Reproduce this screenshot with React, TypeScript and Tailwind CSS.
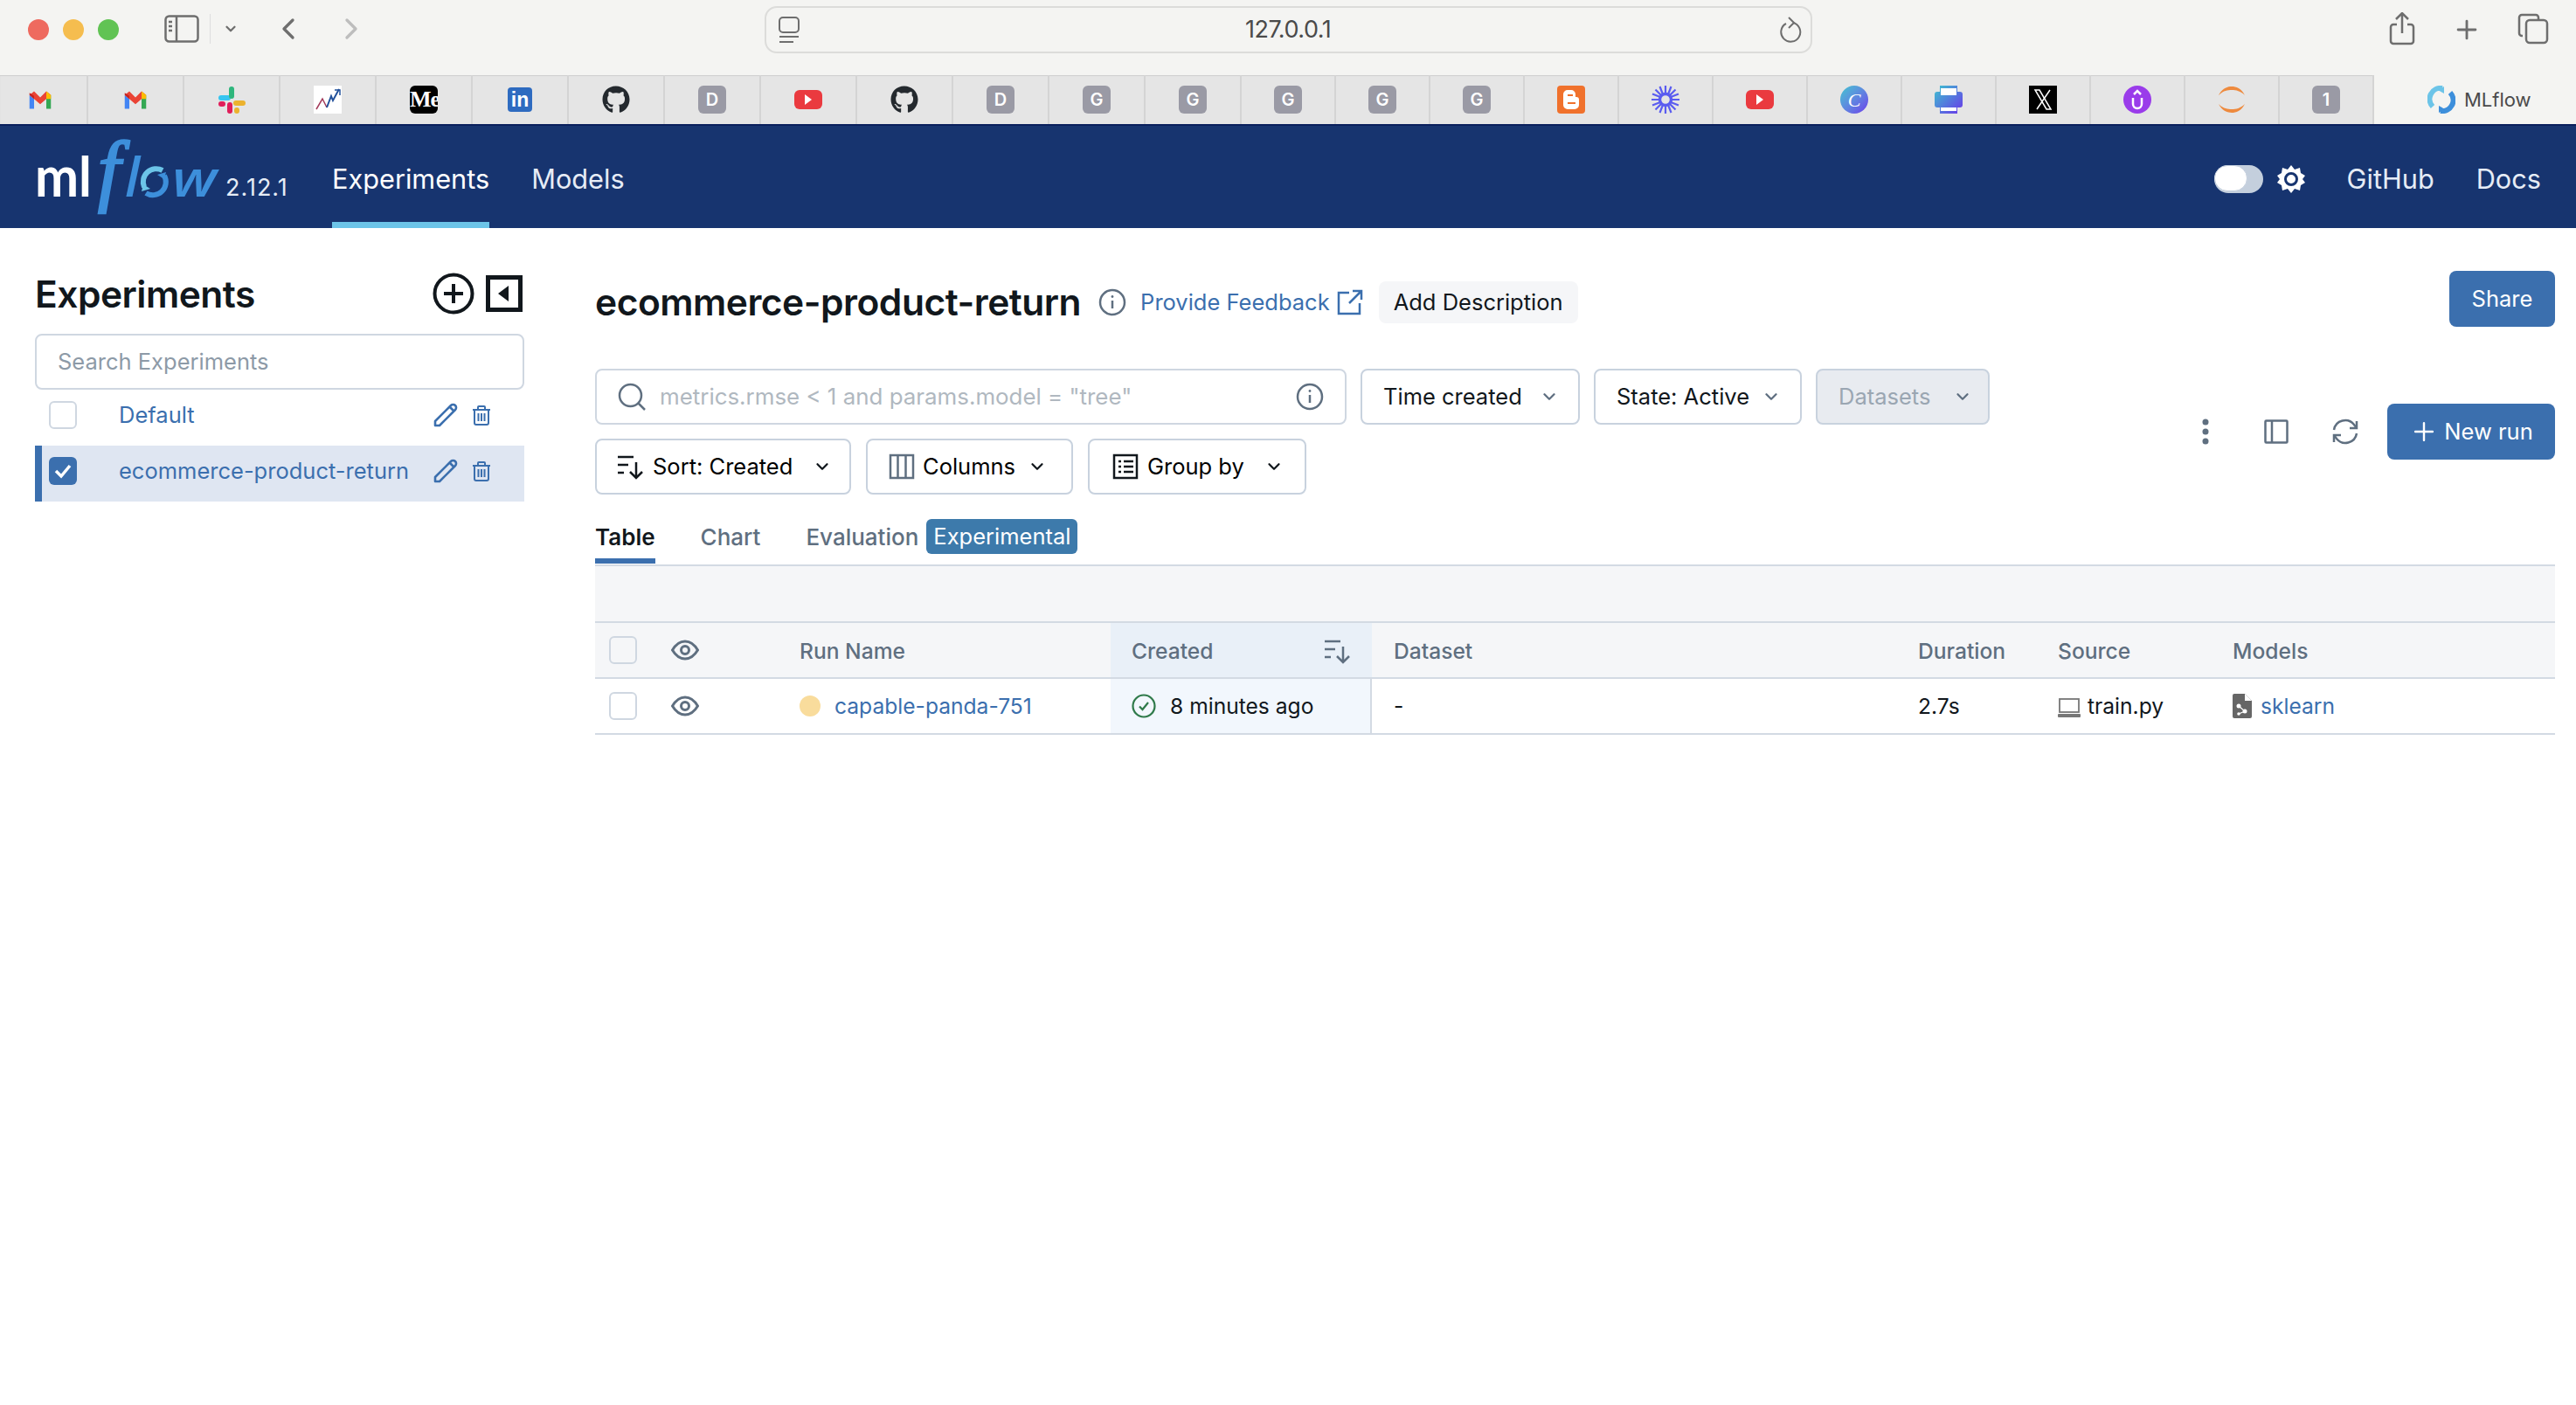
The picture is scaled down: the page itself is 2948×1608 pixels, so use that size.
import { ReactNode } from "react";
import { ChevronDown, ChevronLeft, ChevronRight, Plus } from "lucide-react";
import { FaGithub } from "react-icons/fa";

function Tile({ label, bg = "bg-[#9a9aa5]" }: { label: string; bg?: string }) {
  return (
    <div className={`w-8 h-8 rounded-md ${bg} text-white flex items-center justify-center text-[20px] font-semibold`}>
      {label}
    </div>
  );
}

function Gmail() {
  return (
    <svg width="28" height="22" viewBox="0 0 32 24">
      <path d="M2 6v18h6V11z" fill="#4285f4" />
      <path d="M30 6v18h-6V11z" fill="#34a853" />
      <path d="M2 6 8 1l8 8 8-8 6 5v0l-6 5-8 7-8-7z" fill="#ea4335" />
      <path d="M24 1l6 5v5h-6z" fill="#fbbc04" />
      <path d="M2 3l6 4v4L2 6z" fill="#c5221f" />
    </svg>
  );
}

function Slack() {
  return (
    <svg width="32" height="32" viewBox="0 0 32 32">
      <rect x="1" y="11" width="14" height="6" rx="3" fill="#36c5f0" />
      <rect x="11" y="1" width="6" height="14" rx="3" fill="#2eb67d" transform="translate(2 0)" />
      <rect x="18" y="17" width="14" height="6" rx="3" fill="#ecb22e" />
      <rect x="11" y="19" width="6" height="13" rx="3" fill="#e01e5a" />
      <rect x="1" y="18" width="8" height="6" rx="3" fill="#e01e5a" />
      <rect x="19" y="25" width="6" height="7" rx="3" fill="#ecb22e" />
    </svg>
  );
}

function Trend() {
  return (
    <svg width="32" height="32" viewBox="0 0 32 32">
      <rect width="32" height="32" fill="#fff" />
      <path d="M3 27 10 15 15 25" fill="none" stroke="#a33a5a" strokeWidth="1.5" />
      <path d="M15 25 20 12 22 17 29 4" fill="none" stroke="#21509b" strokeWidth="2" />
      <path d="M24 5h6v6" fill="none" stroke="#21509b" strokeWidth="1.5" />
    </svg>
  );
}

function Medium() {
  return (
    <div className="w-8 h-8 rounded-md bg-black overflow-hidden text-white font-['Liberation_Serif',serif] text-[26px] font-bold leading-8 tracking-[-1px] whitespace-nowrap">
      Me
    </div>
  );
}

function LinkedIn() {
  return (
    <div className="w-7 h-7 rounded-sm bg-[#2e6bc0] text-white text-[23px] font-bold leading-7 text-center font-['Liberation_Sans',sans-serif]">
      in
    </div>
  );
}

function YouTube() {
  return (
    <div className="w-8 h-[22px] rounded-md bg-[#ea3a3f] flex items-center justify-center">
      <div className="w-0 h-0 border-y-[6px] border-y-transparent border-l-[8px] border-l-white" />
    </div>
  );
}

function Blogger() {
  return (
    <div className="w-8 h-8 rounded-sm bg-[#f0712c] flex items-center justify-center">
      <svg width="22" height="24" viewBox="0 0 22 24">
        <path d="M2 6a5 5 0 0 1 5-5h4a5 5 0 0 1 5 5v3h1a3 3 0 0 1 3 3v6a5 5 0 0 1-5 5H7a5 5 0 0 1-5-5z" fill="#fff" />
        <rect x="7" y="6" width="6" height="2" fill="#f0712c" />
        <rect x="7" y="15" width="9" height="2" fill="#f0712c" />
      </svg>
    </div>
  );
}

function Burst() {
  return (
    <svg width="32" height="32" viewBox="0 0 32 32" stroke="#5a5cf0" strokeWidth="3.4">
      <path d="M16 0v10M16 22v10M0 16h10M22 16h10M4.500 4.500l7 7M20.500 20.500l7 7M27.500 4.500l-7 7M11.500 20.500l-7 7M9.500 1l3.500 9M19 22l3.500 9M22.500 1 19 10M13 22 9.500 31M1 9.500l9 3.500M22 19l9 3.500M31 9.500 22 13M10 19l-9 3.500" strokeWidth="2.200" />
      <circle cx="16" cy="16" r="6.500" fill="none" />
    </svg>
  );
}

function Canva() {
  return (
    <div className="w-8 h-8 rounded-full bg-gradient-to-br from-[#3cc4cf] to-[#6b35ea] flex items-center justify-center text-white italic text-[22px] font-['Liberation_Serif',serif]">
      C
    </div>
  );
}

function Printer() {
  return (
    <svg width="34" height="32" viewBox="0 0 34 32">
      <defs>
        <linearGradient id="pg" x1="0" y1="0" x2="1" y2="1">
          <stop offset="0" stopColor="#3cc4cf" />
          <stop offset="1" stopColor="#6b35ea" />
        </linearGradient>
      </defs>
      <path d="M7 0h20v7h3a3 3 0 0 1 3 3v12a3 3 0 0 1-3 3h-3v7H7v-7H4a3 3 0 0 1-3-3V10a3 3 0 0 1 3-3h3z" fill="url(#pg)" />
      <rect x="8" y="3" width="18" height="8" fill="#fff" />
      <rect x="8" y="25" width="18" height="4" fill="#fff" />
    </svg>
  );
}

function XIcon() {
  return (
    <svg width="32" height="32" viewBox="0 0 32 32">
      <rect width="32" height="32" fill="#000" />
      <path d="M7 5h5l13 22h-5z" fill="none" stroke="#fff" strokeWidth="1.500" />
      <path d="M24 5 9 27" stroke="#fff" strokeWidth="1.500" />
    </svg>
  );
}

function Upwork() {
  return (
    <svg width="32" height="32" viewBox="0 0 32 32">
      <circle cx="16" cy="16" r="16" fill="#9a3cea" />
      <path d="M11 14v7a5 5 0 0 0 10 0v-7" fill="none" stroke="#fff" strokeWidth="2.500" />
      <path d="M12 10l4-4 4 4" fill="none" stroke="#fff" strokeWidth="2.500" />
    </svg>
  );
}

function Arcs() {
  return (
    <svg width="32" height="32" viewBox="0 0 32 32" fill="#ee8a3e">
      <path d="M1 11C5 3 11 1 16 1s11 2 15 10C26 6 21 5 16 5S6 6 1 11z" />
      <path d="M1 21c4 8 10 10 15 10s11-2 15-10c-5 5-10 6-15 6S6 26 1 21z" />
    </svg>
  );
}

function MlflowMark() {
  return (
    <svg width="32" height="32" viewBox="0 0 32 32" fill="none" strokeWidth="6">
      <path d="M6 24A12.500 12.500 0 0 1 17 3" stroke="#6cc4e8" />
      <path d="M26 8A12.500 12.500 0 0 1 15 29" stroke="#3d8fdb" />
      <path d="M19 1v8l-7-4z" fill="#6cc4e8" strokeWidth="0" />
      <path d="M13 31v-8l7 4z" fill="#3d8fdb" strokeWidth="0" />
    </svg>
  );
}

const tabs: { icon: ReactNode; w: string }[] = [
  { icon: <div className="pr-[8px]"><Gmail /></div>, w: "w-[101px]" },
  { icon: <Gmail />, w: "w-[110px]" },
  { icon: <Slack />, w: "w-[110px]" },
  { icon: <Trend />, w: "w-[110px]" },
  { icon: <Medium />, w: "w-[110px]" },
  { icon: <LinkedIn />, w: "w-[110px]" },
  { icon: <FaGithub className="w-8 h-8 text-[#24292e]" />, w: "w-[110px]" },
  { icon: <Tile label="D" />, w: "w-[110px]" },
  { icon: <YouTube />, w: "w-[110px]" },
  { icon: <FaGithub className="w-8 h-8 text-[#24292e]" />, w: "w-[110px]" },
  { icon: <Tile label="D" />, w: "w-[110px]" },
  { icon: <Tile label="G" />, w: "w-[110px]" },
  { icon: <Tile label="G" />, w: "w-[110px]" },
  { icon: <Tile label="G" />, w: "w-[108px]" },
  { icon: <Tile label="G" />, w: "w-[108px]" },
  { icon: <Tile label="G" />, w: "w-[108px]" },
  { icon: <Blogger />, w: "w-[108px]" },
  { icon: <Burst />, w: "w-[108px]" },
  { icon: <YouTube />, w: "w-[108px]" },
  { icon: <Canva />, w: "w-[108px]" },
  { icon: <Printer />, w: "w-[108px]" },
  { icon: <XIcon />, w: "w-[108px]" },
  { icon: <Upwork />, w: "w-[108px]" },
  { icon: <Arcs />, w: "w-[108px]" },
  { icon: <Tile label="1" />, w: "w-[108px]" },
];

function BrowserChrome() {
  return (
    <>
      <div className="h-[86px] bg-[#f4f4f2] flex items-start relative">
        <div className="flex gap-4 ml-8 mt-[22px]">
          <div className="w-6 h-6 rounded-full bg-[#ee6a5f]" />
          <div className="w-6 h-6 rounded-full bg-[#f5bd4f]" />
          <div className="w-6 h-6 rounded-full bg-[#61c354]" />
        </div>
        <svg width="40" height="32" viewBox="0 0 40 32" className="ml-[52px] mt-[17px]" fill="none" stroke="#6e6e6e" strokeWidth="2.500">
          <rect x="1.500" y="1.500" width="37" height="29" rx="4" />
          <path d="M14 2v28" />
          <path d="M5 8h4M5 13h4M5 18h4" />
        </svg>
        <div className="w-px h-[34px] bg-[#dedede] ml-[12px] mt-[16px]" />
        <ChevronDown className="w-[18px] h-[18px] text-[#6e6e6e] ml-[14px] mt-[24px]" strokeWidth={3} />
        <ChevronLeft className="w-[40px] h-[40px] text-[#6e6e6e] ml-[37px] mt-[13px]" strokeWidth={2} />
        <ChevronRight className="w-[40px] h-[40px] text-[#bdbdbd] ml-[32px] mt-[13px]" strokeWidth={2} />
        <div className="w-[1199px] h-[54px] ml-[453px] mt-[7px] border-2 border-[#dcdcda] rounded-[14px] flex items-center justify-between pl-[14px] pr-[10px] relative">
          <svg width="24" height="32" viewBox="0 0 24 32" fill="none" stroke="#6e6e6e" strokeWidth="2">
            <rect x="1" y="2" width="22" height="17" rx="4" />
            <path d="M1 24h22" />
            <path d="M1 30h16" />
          </svg>
          <span className="absolute left-[548px] text-[27px] text-[#4a4a4a] font-['Inter',sans-serif] tracking-[-0.5px]">127.0.0.1</span>
          <svg width="26" height="30" viewBox="0 0 26 30" fill="none" stroke="#6e6e6e" strokeWidth="2">
            <path d="M8 8a11 11 0 1 0 8-1" />
            <path d="M11 1l6 6-6 6" />
          </svg>
        </div>
        <div className="flex-1" />
        <svg width="30" height="38" viewBox="0 0 30 38" className="mt-[14px]" fill="none" stroke="#6e6e6e" strokeWidth="2.500">
          <path d="M9 14H5a3 3 0 0 0-3 3v16a3 3 0 0 0 3 3h20a3 3 0 0 0 3-3V17a3 3 0 0 0-3-3h-4" />
          <path d="M15 24V2M8 8l7-7 7 7" />
        </svg>
        <Plus className="w-[34px] h-[34px] text-[#6e6e6e] ml-[42px] mt-[17px]" strokeWidth={2} />
        <svg width="36" height="36" viewBox="0 0 36 36" className="ml-[41px] mr-[31px] mt-[15px]" fill="none" stroke="#6e6e6e" strokeWidth="2.500">
          <path d="M6 26H5a3 3 0 0 1-3-3V5a3 3 0 0 1 3-3h16a3 3 0 0 1 3 3v2" />
          <rect x="10" y="8" width="24" height="26" rx="4" />
        </svg>
      </div>
      <div className="h-[56px] flex bg-[#e5e5e5] shadow-[inset_0_1px_1px_#cfcfcf]">
        {tabs.map((t, i) => (
          <div key={i} className={`${t.w} h-full shrink-0 border-r-2 border-[#d4d4d4] flex items-center justify-center`}>
            {t.icon}
          </div>
        ))}
        <div className="flex-1 bg-[#f4f4f2] flex items-center pl-[61px] gap-[10px]">
          <MlflowMark />
          <span className="text-[22px] text-[#4a4a4a] font-['Inter',sans-serif]">MLflow</span>
        </div>
      </div>
    </>
  );
}

function Logo() {
  return (
    <svg width="212" height="84" viewBox="0 0 212 84" className="shrink-0 overflow-visible">
      <text x="0" y="64" fontFamily="Lato, sans-serif" fontWeight="700" fontSize="64" fill="#fff" textLength="65" lengthAdjust="spacingAndGlyphs">ml</text>
      <text x="72" y="64" fontFamily="'Liberation Serif', serif" fontStyle="italic" fontSize="92" fill="#3d8fdb" stroke="#3d8fdb" strokeWidth="2.500">f</text>
      <text x="103" y="64" fontFamily="'Open Sans', sans-serif" fontStyle="italic" fontWeight="600" fontSize="62" fill="#3d8fdb">l</text>
      <path d="M125 53A15 15 0 0 1 146 34" fill="none" stroke="#6cc4e8" strokeWidth="6" />
      <path d="M122 58l10-3-8-5z" fill="#6cc4e8" />
      <path d="M148 40A15 15 0 0 1 127 60" fill="none" stroke="#3d8fdb" strokeWidth="6" />
      <path d="M150 36l-10 3 8 5z" fill="#3d8fdb" />
      <text x="157" y="64" fontFamily="'Open Sans', sans-serif" fontStyle="italic" fontWeight="600" fontSize="58" fill="#3d8fdb" textLength="51" lengthAdjust="spacingAndGlyphs">w</text>
    </svg>
  );
}

function TopNav() {
  return (
    <div className="h-[119px] bg-[#17346f] border-t-2 border-[#0a1f5c] flex items-center text-[#e6ecf6] text-[30.700px] pl-10 pr-10">
      <Logo />
      <span className="text-[27px] tracking-[1px] text-[#e6ecf6] mt-[26px] ml-[6px] w-[122px] shrink-0">2.12.1</span>
      <div className="h-full relative flex items-center text-white pt-[6px]">
        <span>Experiments</span>
        <div className="absolute bottom-0 left-0 right-0 h-[7px] bg-[#6cc4e8]" />
      </div>
      <span className="ml-[48px] pt-[6px]">Models</span>
      <div className="flex-1" />
      <div className="w-[56px] h-8 rounded-full bg-[#c4cfdd] relative mt-[5px] -ml-[2px] mr-[2px]">
        <div className="absolute left-0 top-0 w-[38px] h-[30px] rounded-full bg-white border border-[#c4cfdd]" />
      </div>
      <svg width="32" height="32" viewBox="0 0 32 32" className="ml-[14px] mt-[5px]">
        <path d="M16 0l4 5 6-2 1 6 5 3-3 4 3 4-5 3-1 6-6-2-4 5-4-5-6 2-1-6-5-3 3-4-3-4 5-3 1-6 6 2z" fill="#fff" />
        <circle cx="16" cy="16" r="6.500" fill="none" stroke="#17346f" strokeWidth="3" />
      </svg>
      <span className="ml-[48px] pt-[6px]">GitHub</span>
      <span className="ml-[48px] pt-[6px]">Docs</span>
    </div>
  );
}

function Checkbox({ checked }: { checked?: boolean }) {
  return checked ? (
    <div className="w-8 h-8 rounded-md bg-[#3b6fae] flex items-center justify-center shrink-0">
      <svg width="22" height="22" viewBox="0 0 22 22" fill="none" stroke="#fff" strokeWidth="3.500">
        <path d="M3 11l6 6L19 5" />
      </svg>
    </div>
  ) : (
    <div className="w-8 h-8 rounded-md bg-white border-2 border-[#cfd7e1] shrink-0" />
  );
}

function PencilIcon() {
  return (
    <svg width="28" height="28" viewBox="0 0 28 28" fill="none" stroke="#3b6fae" strokeWidth="2.600" strokeLinejoin="round" className="shrink-0">
      <path d="M2 21 20 3a3.500 3.500 0 0 1 5 5L7 26H2z" />
      <path d="M18.500 4.500l5 5" />
    </svg>
  );
}

function TrashIcon() {
  return (
    <svg width="20" height="23" viewBox="0 0 20 23" fill="none" stroke="#3b6fae" strokeWidth="2" className="shrink-0">
      <path d="M0 5h20" />
      <path d="M6 5V2a1 1 0 0 1 1-1h6a1 1 0 0 1 1 1v3" />
      <path d="M2 5v15a2 2 0 0 0 2 2h12a2 2 0 0 0 2-2V5" />
      <path d="M6.500 9v9M10 9v9M13.500 9v9" />
    </svg>
  );
}

function ExperimentRow({ name, selected }: { name: string; selected?: boolean }) {
  return (
    <div className={`h-[64px] flex items-center pb-[6px] text-[#3b6fae] ${selected ? "bg-[#dfe6f2] border-l-8 border-[#3b6fae]" : "border-l-8 border-transparent"}`}>
      <div className="ml-2">
        <Checkbox checked={selected} />
      </div>
      <span className="ml-[48px] w-[360px] shrink-0 whitespace-nowrap">{name}</span>
      <PencilIcon />
      <div className="ml-[17px]">
        <TrashIcon />
      </div>
    </div>
  );
}

function Sidebar() {
  return (
    <div className="w-[560px] ml-10 pt-[51px] shrink-0">
      <div className="flex items-center justify-between h-[47px]">
        <h2 className="text-[42.500px] font-semibold text-[#11171c] tracking-[-0.5px] mt-[2px]">Experiments</h2>
        <div className="flex items-center">
          <svg width="48" height="48" viewBox="0 0 48 48" fill="none" stroke="#11171c" strokeWidth="4">
            <circle cx="24" cy="24" r="21.500" />
            <path d="M24 13v22M13 24h22" />
          </svg>
          <svg width="42" height="42" viewBox="0 0 42 42" className="ml-[13px] mr-[2px]">
            <rect x="2.500" y="2.500" width="37" height="37" fill="none" stroke="#11171c" strokeWidth="5" />
            <path d="M26 12v18L14 21z" fill="#11171c" />
          </svg>
        </div>
      </div>
      <div className="mt-[23px] h-[64px] rounded-lg border-2 border-[#cfd7e1] flex items-center pl-[24px] text-[#8d9aa7]">
        Search Experiments
      </div>
      <ExperimentRow name="Default" />
      <ExperimentRow name="ecommerce-product-return" selected />
    </div>
  );
}

function InfoIcon({ color = "#5f6f80" }: { color?: string }) {
  return (
    <svg width="32" height="32" viewBox="0 0 32 32" fill="none" stroke={color} strokeWidth="2.500" className="shrink-0">
      <circle cx="16" cy="16" r="14" />
      <path d="M16 14v9" />
      <circle cx="16" cy="9.500" r="1.400" fill={color} stroke="none" />
    </svg>
  );
}

function SortIcon({ color = "#11171c" }: { color?: string }) {
  return (
    <svg width="30" height="30" viewBox="0 0 30 30" fill="none" stroke={color} strokeWidth="2.500" className="shrink-0">
      <path d="M0 4h18M0 13h12M0 22h7" />
      <path d="M21 10v18M14 21l7 7 7-7" />
    </svg>
  );
}

function Select({ label, w, pr, disabled }: { label: string; w: string; pr: string; disabled?: boolean }) {
  return (
    <div className={`${w} ${pr} h-[64px] rounded-lg border-2 border-[#c8d2de] flex items-center justify-between pl-[24px] ${disabled ? "bg-[#e8ebf0] text-[#9aa6b2]" : "bg-white text-[#11171c]"}`}>
      <span className="whitespace-nowrap">{label}</span>
      <ChevronDown className="w-[22px] h-[22px] text-[#5f6f80]" strokeWidth={2.5} />
    </div>
  );
}

function IconButton({ icon, label, w, pl, gap, mr }: { icon: ReactNode; label: string; w: string; pl: string; gap: string; mr: string }) {
  return (
    <div className={`${w} ${pl} h-[64px] rounded-lg border-2 border-[#c8d2de] flex items-center`}>
      {icon}
      <span className={`${gap} whitespace-nowrap`}>{label}</span>
      <div className="flex-1" />
      <ChevronDown className={`w-[22px] h-[22px] text-[#11171c] ${mr}`} strokeWidth={2.5} />
    </div>
  );
}

function EyeIcon() {
  return (
    <svg width="32" height="24" viewBox="0 0 32 24" fill="none" stroke="#5f6f80" strokeWidth="3">
      <path d="M1.500 12C6 4.500 11 2 16 2s10 2.500 14.500 10C26 19.500 21 22 16 22S6 19.500 1.500 12z" />
      <circle cx="16" cy="12" r="4.500" />
    </svg>
  );
}

function RunsTable() {
  const cols = "grid grid-cols-[87px_147px_356px_299px_625px_160px_200px_1fr]";
  return (
    <div className="text-[24.600px]">
      <div className="h-[65px] bg-[#f5f6f8] border-b-2 border-[#d3dae3]" />
      <div className={`${cols} h-[64px] bg-[#f5f6f8] border-b-2 border-[#d3dae3] text-[#5f6f80] font-medium items-center`}>
        <div className="pl-4">
          <div className="w-8 h-8 rounded-md border-2 border-[#cfd7e1]" />
        </div>
        <EyeIcon />
        <span className="pt-[2px]">Run Name</span>
        <div className="h-full bg-[#e9f0f8] flex items-center justify-between pl-6 pr-6 pt-[2px]">
          <span>Created</span>
          <SortIcon color="#5f6f80" />
        </div>
        <span className="pl-[25px] pt-[2px]">Dataset</span>
        <span className="pt-[2px]">Duration</span>
        <span className="pt-[2px]">Source</span>
        <span className="pt-[2px]">Models</span>
      </div>
      <div className={`${cols} h-[64px] border-b-2 border-[#d3dae3] text-[#11171c] items-center`}>
        <div className="pl-4">
          <div className="w-8 h-8 rounded-md border-2 border-[#cfd7e1]" />
        </div>
        <EyeIcon />
        <div className="flex items-center gap-4">
          <div className="w-6 h-6 rounded-full bg-[#f9dc9c]" />
          <span className="text-[#3b6fae]">capable-panda-751</span>
        </div>
        <div className="h-full bg-[#f2f7fd] border-r-2 border-[#d3dae3] flex items-center pl-6">
          <svg width="28" height="28" viewBox="0 0 28 28" fill="none" stroke="#2f7a4a" strokeWidth="2.200">
            <circle cx="14" cy="14" r="12.500" />
            <path d="M9 14.500l3.500 3.500L19 10" />
          </svg>
          <span className="ml-4">8 minutes ago</span>
        </div>
        <span className="pl-[25px]">-</span>
        <span>2.7s</span>
        <div className="flex items-center gap-2">
          <svg width="26" height="22" viewBox="0 0 26 22" fill="none" className="mt-1">
            <rect x="2" y="1" width="22" height="15" fill="none" stroke="#777" strokeWidth="1.800" />
            <rect x="0" y="18" width="26" height="4" rx="1" fill="#777" />
          </svg>
          <span>train.py</span>
        </div>
        <div className="flex items-center gap-[10px]">
          <svg width="22" height="28" viewBox="0 0 22 28">
            <path d="M2 0h12l8 8v18a2 2 0 0 1-2 2H2a2 2 0 0 1-2-2V2a2 2 0 0 1 2-2z" fill="#666" />
            <path d="M14 0v8h8z" fill="#fff" />
            <circle cx="7" cy="14" r="2.500" fill="#fff" />
            <circle cx="14" cy="20" r="2.500" fill="#fff" />
            <circle cx="7" cy="23" r="1.800" fill="#fff" />
            <path d="M7 14l7 6-7 3" stroke="#fff" strokeWidth="1.200" fill="none" />
          </svg>
          <span className="text-[#3b6fae]">sklearn</span>
        </div>
      </div>
    </div>
  );
}

function Content() {
  return (
    <div className="flex-1 min-w-0 ml-[81px] mr-6 pt-[49px]">
      <div className="flex items-start justify-between">
        <div className="flex items-center h-[72px]">
          <h1 className="text-[42.500px] font-semibold text-[#11171c] tracking-[-0.5px] whitespace-nowrap">ecommerce-product-return</h1>
          <div className="ml-5">
            <InfoIcon />
          </div>
          <span className="ml-[16px] text-[#3b6fae] whitespace-nowrap">Provide Feedback</span>
          <svg width="30" height="30" viewBox="0 0 30 30" fill="none" stroke="#3b6fae" strokeWidth="2.500" className="ml-2">
            <path d="M14 4H2v24h24V16" />
            <path d="M18 2h10v10M28 2 14 16" />
          </svg>
          <div className="ml-[18px] h-[48px] px-[17px] rounded-lg bg-[#f5f6f8] flex items-center text-[#11171c] whitespace-nowrap">Add Description</div>
        </div>
        <div className="w-[121px] h-[64px] rounded-lg bg-[#3b6fae] text-white flex items-center justify-center">Share</div>
      </div>
      <div className="mt-10 flex items-center justify-between">
        <div className="flex flex-col gap-4">
          <div className="flex gap-4">
            <div className="w-[860px] h-[64px] rounded-lg border-2 border-[#cfd7e1] flex items-center pl-[24px] pr-6 text-[#b0b8c0]">
              <svg width="32" height="32" viewBox="0 0 32 32" fill="none" stroke="#5f6f80" strokeWidth="2.500" className="shrink-0">
                <circle cx="14.500" cy="14.500" r="12.500" />
                <path d="M23.500 23.500 31 31" />
              </svg>
              <span className="ml-[16px] text-[25.900px]">metrics.rmse &lt; 1 and params.model = "tree"</span>
              <div className="flex-1" />
              <InfoIcon />
            </div>
            <Select label="Time created" w="w-[251px]" pr="pr-[22px]" />
            <Select label="State: Active" w="w-[238px]" pr="pr-[22px]" />
            <Select label="Datasets" w="w-[199px]" pr="pr-[18px]" disabled />
          </div>
          <div className="flex gap-[17px]">
            <IconButton icon={<SortIcon />} label="Sort: Created" w="w-[293px]" pl="pl-[24px]" gap="ml-[10px]" mr="mr-[20px]" />
            <IconButton
              icon={
                <svg width="30" height="30" viewBox="0 0 30 30" fill="none" stroke="#5f6f80" strokeWidth="2.500">
                  <rect x="2" y="2" width="26" height="26" />
                  <path d="M10.500 2v26M19.500 2v26" />
                </svg>
              }
              label="Columns"
              w="w-[237px]"
              pl="pl-[24px]"
              gap="ml-[9px]"
              mr="mr-[28px]"
            />
            <IconButton
              icon={
                <svg width="30" height="30" viewBox="0 0 30 30" fill="none" stroke="#11171c" strokeWidth="2.500">
                  <rect x="2" y="2" width="26" height="26" />
                  <path d="M7 9h3M13 9h11M7 15h3M13 15h11M7 21h3M13 21h11" />
                </svg>
              }
              label="Group by"
              w="w-[250px]"
              pl="pl-[26px]"
              gap="ml-[10px]"
              mr="mr-[24px]"
            />
          </div>
        </div>
        <div className="flex items-center">
          <svg width="8" height="30" viewBox="0 0 8 30" fill="#5f6f80">
            <circle cx="4" cy="4" r="3.500" />
            <circle cx="4" cy="15" r="3.500" />
            <circle cx="4" cy="26" r="3.500" />
          </svg>
          <svg width="28" height="28" viewBox="0 0 28 28" fill="none" stroke="#5f6f80" strokeWidth="2.500" className="ml-[63px]">
            <rect x="1.500" y="1.500" width="25" height="25" rx="1" />
            <path d="M9 2v24" />
          </svg>
          <svg width="32" height="32" viewBox="0 0 32 32" fill="none" stroke="#5f6f80" strokeWidth="2.500" className="ml-[49px]">
            <path d="M3 14A13 13 0 0 1 26 8l3 4" />
            <path d="M29 4v8h-8" />
            <path d="M29 18A13 13 0 0 1 6 24l-3-4" />
            <path d="M3 28v-8h8" />
          </svg>
          <div className="ml-[32px] w-[192px] h-[64px] rounded-lg bg-[#3b6fae] text-white flex items-center justify-center gap-[6px]">
            <Plus className="w-[34px] h-[34px]" strokeWidth={1.7} />
            <span>New run</span>
          </div>
        </div>
      </div>
      <div className="h-[82px] flex items-start border-b-2 border-[#d3dae3] text-[#5f6f80] font-medium text-[26px]">
        <div className="h-full flex items-center relative text-[#11171c] font-semibold pt-[16px] -mb-[2px]">
          Table
          <div className="absolute left-0 right-0 bottom-[1px] h-[6px] bg-[#3b6fae]" />
        </div>
        <div className="h-full flex items-center ml-[52px] pt-[16px]">Chart</div>
        <div className="h-full flex items-center ml-[52px] pt-[16px]">Evaluation</div>
        <div className="h-full flex items-center ml-[9px] pt-[16px]">
          <div className="h-[40px] rounded-md bg-[#3d7aab] text-white px-2 flex items-center font-normal text-[25.500px]">Experimental</div>
        </div>
      </div>
      <RunsTable />
    </div>
  );
}

export default function App() {
  return (
    <div className="w-[2948px] h-[1608px] bg-white overflow-hidden font-['Inter',sans-serif] text-[25.500px]">
      <BrowserChrome />
      <TopNav />
      <div className="flex">
        <Sidebar />
        <Content />
      </div>
    </div>
  );
}
